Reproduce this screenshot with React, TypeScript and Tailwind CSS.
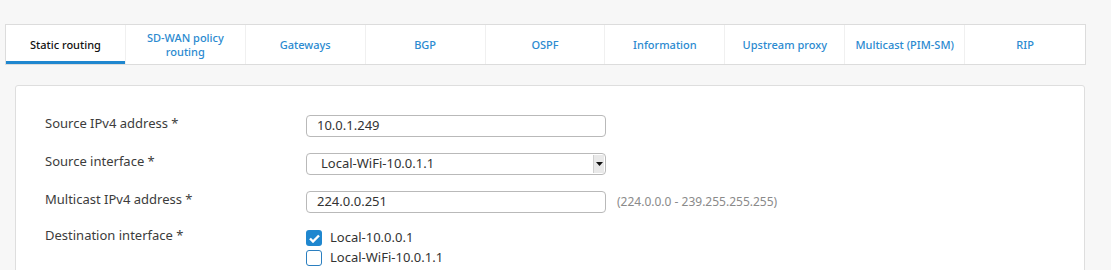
import React from "react";

const tabs = [
  "Static routing",
  "SD-WAN policy routing",
  "Gateways",
  "BGP",
  "OSPF",
  "Information",
  "Upstream proxy",
  "Multicast (PIM-SM)",
  "RIP",
];

function Row({ label, children }: { label: string; children: React.ReactNode }) {
  return (
    <div className="flex items-center h-[38px]">
      <div className="w-[261px] text-[13px] text-[#3c3c3c] leading-[16px] -mt-[7px]">{label}</div>
      {children}
    </div>
  );
}

export default function App() {
  return (
    <div
      className="w-[1111px] h-[270px] overflow-hidden bg-[#f7f7f7]"
      style={{ fontFamily: '"Noto Sans", "Open Sans", sans-serif' }}
    >
      <div className="pt-[24px] pl-[5px]">
        <div className="flex w-[1081px] h-[41px] bg-white border border-[#dcdcdc]">
          {tabs.map((t, i) => (
            <div
              key={t}
              className={`relative w-[120px] flex items-center justify-center text-center text-[11px] leading-[14px] px-2 ${
                i < tabs.length - 1 ? "border-r border-[#f0f0f0]" : ""
              } ${i === 0 ? "text-[#111] font-medium" : "text-[#2b8ad0] font-medium"}`}
            >
              {t === "SD-WAN policy routing" ? (
                <span>
                  SD-WAN policy
                  <br />
                  routing
                </span>
              ) : (
                t
              )}
              {i === 0 && <div className="absolute left-0 right-0 bottom-0 h-[3px] bg-[#1f87cf]" />}
            </div>
          ))}
        </div>
      </div>
      <div className="ml-[15px] mt-[20px] w-[1070px] h-[200px] bg-white border border-[#dedede] rounded-t-[3px] pl-[29px] pt-[21px]">
        <Row label="Source IPv4 address *">
          <div className="w-[300px] h-[22px] border border-[#b9b9b9] rounded-[4px] flex items-center pl-[10px] text-[13px] text-[#333]">
            10.0.1.249
          </div>
        </Row>
        <Row label="Source interface *">
          <div className="w-[300px] h-[22px] border border-[#b9b9b9] rounded-[4px] flex items-center pl-[14px] text-[13px] text-[#333] relative">
            Local-WiFi-10.0.1.1
            <div className="absolute right-[1px] top-[1px] bottom-[1px] w-[11px] bg-[#e9e9e9] border-l border-[#cfcfcf] flex items-center justify-center">
              <svg width="7" height="4" viewBox="0 0 7 4">
                <path d="M0 0H7L3.5 4Z" fill="#111" />
              </svg>
            </div>
          </div>
        </Row>
        <Row label="Multicast IPv4 address *">
          <div className="w-[300px] h-[22px] border border-[#b9b9b9] rounded-[4px] flex items-center pl-[10px] text-[13px] text-[#333]">
            224.0.0.251
          </div>
          <span className="ml-[11px] text-[12px] text-[#8a8a8a]">(224.0.0.0 - 239.255.255.255)</span>
        </Row>
        <div className="flex items-start">
          <div className="w-[261px] text-[13px] text-[#3c3c3c] leading-[16px] mt-[6px]">Destination interface *</div>
          <div className="flex flex-col gap-[4px] pt-[9px]">
            <div className="flex items-center gap-[8px] h-[16px]">
              <div className="w-[16px] h-[16px] rounded-[3px] bg-[#1f87cf] flex items-center justify-center">
                <svg width="11" height="9" viewBox="0 0 11 9">
                  <path d="M1 4.5L4 7.5L10 1.5" stroke="white" strokeWidth="2.4" fill="none" />
                </svg>
              </div>
              <span className="text-[13px] text-[#333]">Local-10.0.0.1</span>
            </div>
            <div className="flex items-center gap-[8px] h-[16px]">
              <div className="w-[16px] h-[16px] rounded-[3px] border-[1.5px] border-[#2b7fc0] bg-white" />
              <span className="text-[13px] text-[#333]">Local-WiFi-10.0.1.1</span>
            </div>
          </div>
        </div>
      </div>
    </div>
  );
}
